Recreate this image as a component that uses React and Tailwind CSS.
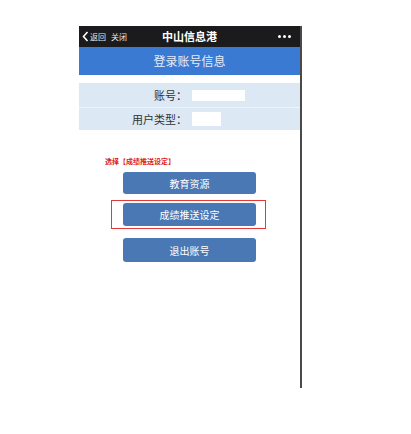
export default function App() {
  const font = { fontFamily: '"Noto Sans CJK SC", "Noto Sans", sans-serif' };
  return (
    <div className="w-[411px] h-[434px] bg-white overflow-hidden" style={font}>
      <div className="ml-[79px] mt-[26px] w-[223px] h-[362px] border-r-2 border-[#4a4a4a] flex flex-col">
        <div className="h-[21px] bg-[#1b1b1d] flex items-center px-[3px] text-white relative">
          <div className="flex items-center text-[8px] leading-none text-[#e8e8e8]">
            <svg width="7" height="11" viewBox="0 0 7 11" className="mr-[1px]">
              <path d="M5.5 1 L1.5 5.5 L5.5 10" stroke="#fff" strokeWidth="1.6" fill="none" />
            </svg>
            <span>返回</span>
            <span className="ml-[5px]">关闭</span>
          </div>
          <div className="absolute left-0 right-0 text-center text-[11px] font-bold leading-none">中山信息港</div>
          <div className="ml-auto mr-[6px] flex gap-[2px]">
            <span className="w-[3px] h-[3px] rounded-full bg-white" />
            <span className="w-[3px] h-[3px] rounded-full bg-white" />
            <span className="w-[3px] h-[3px] rounded-full bg-white" />
          </div>
        </div>
        <div className="h-[28px] bg-[#3a7ad2] flex items-center justify-center text-[12px] text-[#e6eefa]">
          登录账号信息
        </div>
        <div className="mt-[8px] bg-[#dce8f4] flex flex-col text-[11px] text-[#333]">
          <div className="h-[25px] flex items-center border-b border-[#eef3f9]">
            <div className="w-[108px] text-right">账号：</div>
            <div className="ml-[5px] w-[53px] h-[11px] bg-white" />
          </div>
          <div className="h-[22px] flex items-center">
            <div className="w-[108px] text-right">用户类型：</div>
            <div className="ml-[5px] w-[29px] h-[14px] bg-white" />
          </div>
        </div>
        <div className="mt-[28px] ml-[26px] text-[7px] leading-none font-bold text-[#e02020]">选择【成绩推送设定】</div>
        <div className="mt-[7px] flex flex-col items-start">
          <div className="ml-[44px] w-[133px] h-[22px] rounded-[3px] bg-[#4a78b5] text-white text-[10px] flex items-center justify-center">
            教育资源
          </div>
          <div className="ml-[32px] mt-[6px] w-[155px] h-[29px] border border-[#e03a3a] flex items-center">
            <div className="ml-[11px] w-[133px] h-[23px] rounded-[3px] bg-[#4a78b5] text-white text-[10px] flex items-center justify-center">
              成绩推送设定
            </div>
          </div>
          <div className="ml-[44px] mt-[9px] w-[133px] h-[24px] rounded-[3px] bg-[#4a78b5] text-white text-[10px] flex items-center justify-center">
            退出账号
          </div>
        </div>
      </div>
    </div>
  );
}
